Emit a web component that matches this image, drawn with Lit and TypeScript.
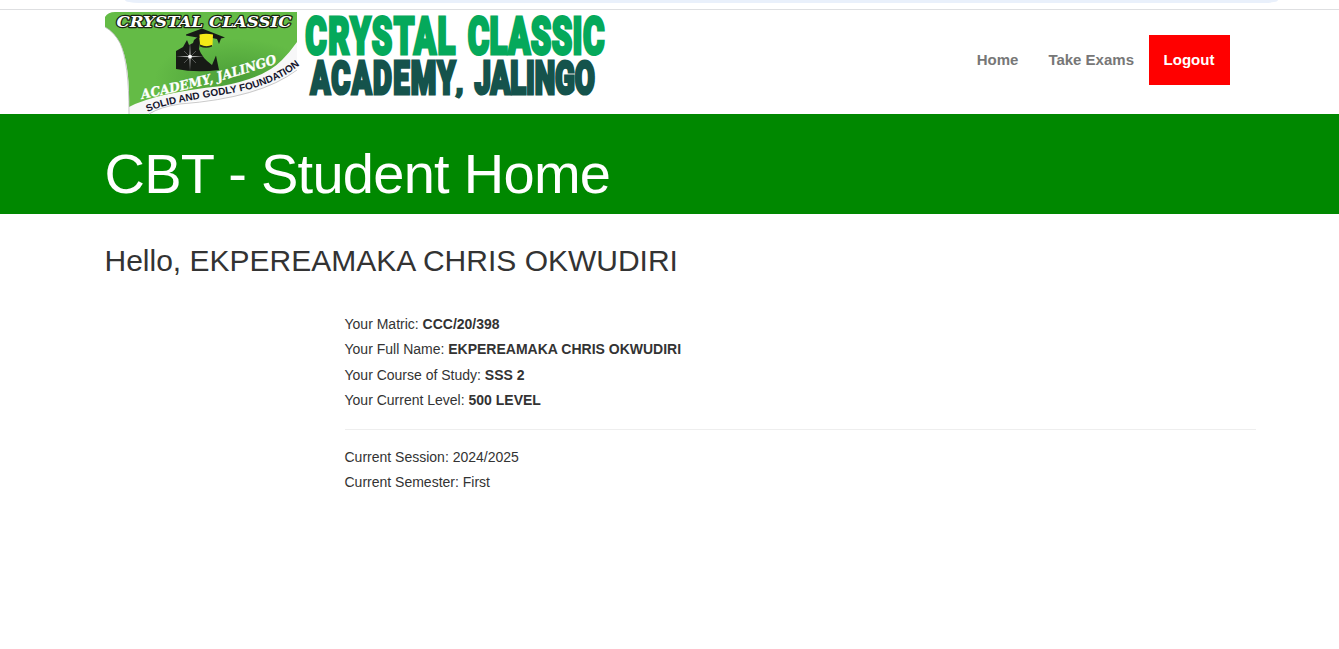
import { LitElement, html, css } from "lit";
import { customElement } from "lit/decorators.js";

@customElement("school-logo")
class SchoolLogo extends LitElement {
  static styles = css`
    :host { display: block; width: 510px; height: 104px; }
    svg { display: block; overflow: visible; }
    .word { font: 900 52px "Roboto", "Liberation Sans", sans-serif; stroke-width: 2.7px; stroke-linejoin: miter; }
    .word * { vector-effect: non-scaling-stroke; }
    .light { fill: #05a95b; stroke: #05a95b; }
    .dark { fill: #15534c; stroke: #15534c; }
    .arch { font: italic bold 13px "DejaVu Serif", serif; fill: #fff; stroke: #fff; stroke-width: .3px; }
    .title { font: italic bold 15px "DejaVu Serif", serif; fill: #fff; stroke: #18220f; stroke-width: 2.4px; paint-order: stroke; stroke-linejoin: round; }
    .motto { font: bold 10px "Liberation Sans", Arial, sans-serif; fill: #14142c; }
  `;
  render() {
    return html`<svg width="510" height="104" viewBox="105 10 510 104" role="img" aria-label="Crystal Classic Academy, Jalingo">
      <defs>
        <radialGradient id="shade" cx=".68" cy=".7" r=".42">
          <stop offset="0" stop-color="#4b9e38" /><stop offset="1" stop-color="#64bb46" />
        </radialGradient>
        <path id="academy" d="M142 99Q222 83 286 60" />
        <path id="found" d="M147.500 112C165 104.500 180 102.500 203 98S245 92 262 85.500S290 74 306 60" />
      </defs>
      <path d="M129 114V106L297 40V68Q275 90 228 98Q170 101 150 114Z" fill="#f7f7f8" />
      <path d="M105 17Q108 12 115 12H297V42Q290 52 282 60Q265 78 222 86Q155 93 129 107Q130 64 120 43Q114 32 105 27Z" fill="url(#shade)" />
      <path d="M105 27Q114 32 120 43Q129 63 129 114M149 114Q160 107 180 104Q260 98 297 70" fill="none" stroke="#bdbdbd" stroke-width=".8" />
      <path d="M176 51L183 47L187 40L189 45L193 43L194 40L199 36L200 43L199 49Q202 58 212 65L216 55.500L219 70Q196 73 176 69Z" fill="#171a16" />
      <path d="M186 34.500L202 28.500L225 37.500L221 38.500L219 44L217 39L210 37.500L200 38L186 35.500Z" fill="#171a16" />
      <path d="M199.500 34.500Q206 33 213 34.500L212.500 45.500Q206 47.500 200 45Z" fill="#f5ea17" />
      <path d="M200 44.500Q206 47.500 212 45V46.500Q206 49 200 46.500Z" fill="#272716" />
      <path d="M190 42L190.600 56L204 56.600L190.600 57.200L190 71L189.400 57.200L176 56.600L189.400 56Z" fill="#dcdcdc" opacity=".85" />
      <path d="M184 51L196 63M196 51L184 63" stroke="#999" stroke-width=".5" />
      <circle cx="190" cy="56.600" r="1.900" fill="#fff" />
      <text class="title" x="116.500" y="26.800" textLength="175" lengthAdjust="spacingAndGlyphs">CRYSTAL CLASSIC</text>
      <text class="arch"><textPath href="#academy" textLength="140" lengthAdjust="spacingAndGlyphs">ACADEMY, JALINGO</textPath></text>
      <text class="motto"><textPath href="#found" textLength="161" lengthAdjust="spacingAndGlyphs">SOLID AND GODLY FOUNDATION</textPath></text>
      <g class="word light">
        <text transform="translate(305.300 54) scale(.63 1)" textLength="238">CRYSTAL</text>
        <text transform="translate(467.700 54) scale(.63 1)" textLength="217">CLASSIC</text>
      </g>
      <g class="word dark">
        <text transform="translate(310.500 94) scale(.56 .88)" textLength="259">ACADEMY</text>
        <text transform="translate(456 92) scale(.5 .5)">,</text>
        <text transform="translate(474.500 94) scale(.56 .88)" textLength="215">JALINGO</text>
      </g>
    </svg>`;
  }
}

@customElement("app-root")
class AppRoot extends LitElement {
  static styles = css`
    :host { display: block; min-height: 649px; background: #fff; color: #333; font: 14px/25.2px "Liberation Sans", Arial, sans-serif; }
    .browser { height: 9px; border-bottom: 1px solid #dedfe1; }
    .address { height: 3px; margin: 0 61px 0 125px; background: #e9f0fb; border-radius: 0 0 14px 14px / 0 0 3px 3px; }
    header { display: flex; justify-content: space-between; height: 104px; padding: 0 109px 0 105px; }
    nav { display: flex; align-items: center; height: 50px; margin-top: 25px; }
    nav a { font-size: 15px; font-weight: bold; line-height: 50px; color: #777; padding: 0 15px; text-decoration: none; }
    nav a.logout { color: #fff; background: #f00; padding: 0 1px 0 0; width: 80px; text-align: center; }
    .banner { height: 100px; background: #080; padding-left: 104.500px; }
    h1 { margin: 0; padding-top: 29px; font-size: 56px; font-weight: normal; line-height: 62px; letter-spacing: -0.72px; color: #fff; }
    main { padding: 30px 83px 0 104.500px; }
    h2 { margin: 0; font-size: 30px; font-weight: normal; line-height: 33px; }
    .details { margin: 35.200px 0 0 240px; }
    hr { margin: 15.800px 0 15px; border: 0; border-top: 1px solid #eee; }
  `;
  render() {
    return html`
      <div class="browser"><div class="address"></div></div>
      <header>
        <school-logo></school-logo>
        <nav><a>Home</a><a>Take Exams</a><a class="logout">Logout</a></nav>
      </header>
      <section class="banner"><h1>CBT - Student Home</h1></section>
      <main>
        <h2>Hello, EKPEREAMAKA CHRIS OKWUDIRI</h2>
        <div class="details">
          <div>Your Matric: <b>CCC/20/398</b></div>
          <div>Your Full Name: <b>EKPEREAMAKA CHRIS OKWUDIRI</b></div>
          <div>Your Course of Study: <b>SSS 2</b></div>
          <div>Your Current Level: <b>500 LEVEL</b></div>
          <hr />
          <div>Current Session: 2024/2025</div>
          <div>Current Semester: First</div>
        </div>
      </main>`;
  }
}
